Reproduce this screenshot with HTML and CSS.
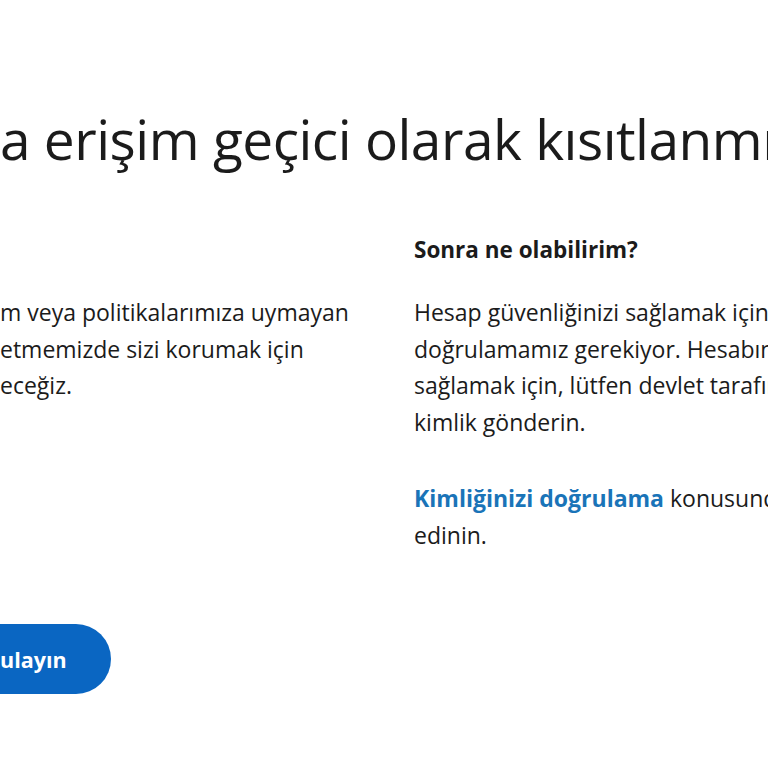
FILE: index.html
```html
<!DOCTYPE html>
<html lang="tr">
<head>
<meta charset="utf-8">
<title>Erişim kısıtlandı</title>
<link rel="stylesheet" href="styles.css">
</head>
<body>
<main class="page">
  <h1 class="title">a erişim geçici olarak kısıtlanmıştır</h1>
  <div class="cols">
    <section class="col col-left">
      <div class="col-head"></div>
      <p class="text">m veya politikalarımıza uymayan<br>etmemizde sizi korumak için<br>eceğiz.</p>
    </section>
    <section class="col col-right">
      <h2 class="col-head">Sonra ne olabilirim?</h2>
      <p class="text">Hesap güvenliğinizi sağlamak için kimliğinizi<br>doğrulamamız gerekiyor. Hesabınızın güvenliğini<br>sağlamak için, lütfen devlet tarafından verilmiş bir<br>kimlik gönderin.</p>
      <p class="text more"><a class="link" href="#">Kimliğinizi doğrulama</a> konusunda daha fazla bilgi<br>edinin.</p>
    </section>
  </div>
  <button class="btn" type="button">ulayın</button>
</main>
</body>
</html>
```
FILE: styles.css
```css
html, body {
  margin: 0;
  padding: 0;
  background: #ffffff;
  overflow: hidden;
}
body {
  font-family: "Open Sans", "Noto Sans", sans-serif;
  color: #1b1b1b;
  width: 768px;
  height: 768px;
}
.page {
  padding-top: 101px;
  white-space: nowrap;
}
.title {
  margin: 0;
  font-size: 55px;
  font-weight: 400;
  line-height: 76px;
  letter-spacing: -0.5px;
}
.cols {
  display: grid;
  grid-template-columns: 414px 1fr;
  margin-top: 53px;
}
.col {
  display: flex;
  flex-direction: column;
}
.col-head {
  margin: 0;
  height: 40px;
  font-size: 22.5px;
  font-weight: 700;
  line-height: 40px;
}
.text {
  margin: 24px 0 0 0;
  font-size: 23px;
  line-height: 36.5px;
}
.text.more {
  margin-top: 40px;
}
.link {
  color: #1a74b8;
  font-weight: 700;
  text-decoration: none;
}
.btn {
  display: block;
  margin: 71px 0 0 -12px;
  height: 70px;
  padding: 0 44px 0 12px;
  border: none;
  border-radius: 0 35px 35px 0;
  background: #0a66c2;
  color: #ffffff;
  font-family: inherit;
  font-size: 21.5px;
  font-weight: 700;
}
```
